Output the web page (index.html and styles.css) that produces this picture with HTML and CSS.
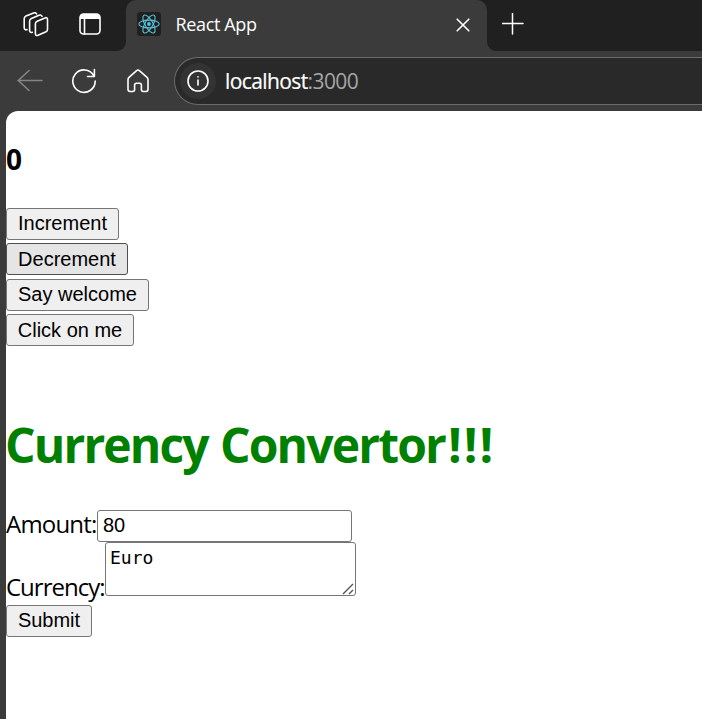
FILE: index.html
```html
<!DOCTYPE html>
<html lang="en">
<head>
<meta charset="utf-8">
<title>React App</title>
<link rel="stylesheet" href="styles.css">
</head>
<body>
<header class="tabstrip">
  <div class="strip-start">
    <svg class="icon" width="26" height="26" viewBox="0 0 26 26">
      <path d="M14.2 9.2 22 5.9Q24.5 5 24.5 7.5V17.2Q24.5 19 23 19.8L15 23.3Q12.4 24.2 12.4 21.5V11.8Q12.4 9.9 14.2 9.2M9.3 20.3Q6.6 21 6.6 18.3V9.3Q6.6 7.3 8.4 6.5L16 3.3Q18.2 2.5 19 4.3M4 17.6Q1.2 18.3 1.2 15.4V6.7Q1.2 4.7 3 3.9L10.6.9Q12.7.3 13.6 1.9"/>
    </svg>
    <svg class="icon" width="24" height="24" viewBox="0 0 24 24">
      <rect x="2" y="2" width="20" height="20" rx="3.5"/>
      <path d="M6.5 6V22"/>
      <path class="solid" d="M2 7V5Q2 2 5 2H19Q22 2 22 5V7Z"/>
    </svg>
  </div>
  <div class="tab">
    <svg class="favicon" width="24" height="24" viewBox="0 0 24 24">
      <rect width="24" height="24" rx="3"/>
      <ellipse cx="12" cy="12" rx="10.2" ry="3.9"/>
      <ellipse cx="12" cy="12" rx="10.2" ry="3.9" transform="rotate(60 12 12)"/>
      <ellipse cx="12" cy="12" rx="10.2" ry="3.9" transform="rotate(120 12 12)"/>
      <circle cx="12" cy="12" r="1.9"/>
    </svg>
    <span class="tab-title">React App</span>
    <svg class="icon close" width="14" height="14" viewBox="0 0 14 14"><path d="M1.2 1.2 12.8 12.8M12.8 1.2 1.2 12.8"/></svg>
  </div>
  <div class="strip-end">
    <svg class="icon" width="22" height="22" viewBox="0 0 22 22"><path d="M10.5 0V21M0 10.5H21"/></svg>
  </div>
</header>
<nav class="toolbar">
  <svg class="icon muted" width="26" height="26" viewBox="0 0 26 26"><path d="M25 12.5H1M12 2.5 1.3 12.5 12 22.5"/></svg>
  <svg class="icon" width="26" height="26" viewBox="0 0 26 26"><path d="M22.7 7.5A11.2 11.2 0 1 0 24.2 13M23.4 1.5V8.5H16.5"/></svg>
  <svg class="icon home" width="24" height="26" viewBox="0 0 24 26"><path d="M2 11.7Q2 10.3 3 9.4L10.6 2.6Q12 1.4 13.4 2.6L21 9.4Q22 10.3 22 11.7V21.3Q22 23.5 20 23.5H17.4Q15.4 23.5 15.4 21.5V17.2Q15.4 15.2 13.4 15.2H10.6Q8.6 15.2 8.6 17.2V21.5Q8.6 23.5 6.6 23.5H4Q2 23.5 2 21.3Z"/></svg>
  <div class="address">
    <span class="site-info">
      <svg class="icon" width="24" height="24" viewBox="0 0 24 24"><circle cx="12" cy="12" r="10"/><path d="M12 11V16M12 7.8V8"/></svg>
    </span>
    <span class="url"><span class="host">localhost</span>:3000</span>
  </div>
</nav>
<main class="page">
  <h3 class="count">0</h3>
  <div class="actions">
    <button class="btn increment">Increment</button>
    <button class="btn decrement">Decrement</button>
    <button class="btn welcome">Say welcome</button>
    <button class="btn click">Click on me</button>
  </div>
  <h1 class="title">Currency Convertor<span class="marks">!!!</span></h1>
  <form class="form">
    <div class="row"><label class="amount-label" for="amount">Amount:</label><input id="amount" class="amount" value="80"></div>
    <div class="row"><label class="currency-label" for="currency">Currency:</label><div class="currency-box"><textarea id="currency" class="currency">Euro</textarea><svg class="grip" width="12" height="12" viewBox="0 0 12 12"><path d="M1 11 11 1M7 11 11 7"/></svg></div></div>
    <button class="btn submit" type="button">Submit</button>
  </form>
</main>
</body>
</html>
```
FILE: styles.css
```css
* { box-sizing: border-box; }

body {
  margin: 0;
  height: 719px;
  overflow: hidden;
  display: flex;
  flex-direction: column;
  background: #3b3b3b;
  color: #000;
  font: 24px/32px "Open Sans", "Noto Sans", sans-serif;
}

svg { display: block; flex: none; }
.icon { fill: none; stroke: #fff; stroke-width: 1.6; stroke-linecap: round; stroke-linejoin: round; }
.icon .solid { fill: #fff; stroke: none; }
.icon.muted { stroke: #858585; }

.tabstrip {
  display: flex;
  flex: none;
  height: 51px;
  background: linear-gradient(#202020 25px, #3b3b3b 25px);
}
.strip-start {
  display: flex;
  gap: 29px;
  width: 126px;
  padding: 12px 0 0 23px;
  background: #202020;
  border-bottom-right-radius: 9px;
}
.tab {
  display: flex;
  align-items: center;
  width: 361px;
  padding: 0 17.5px 3px 11px;
  background: #3b3b3b;
  border-radius: 10px 10px 0 0;
}
.favicon { fill: none; stroke: #58c4dc; stroke-width: 1.1; }
.favicon rect { fill: #202020; stroke: none; }
.favicon circle { fill: #58c4dc; stroke: none; }
.tab-title { margin-left: 14.5px; color: #fff; font-size: 18px; letter-spacing: -0.35px; }
.close { margin: 2px 0 0 auto; }
.strip-end {
  flex: 1;
  padding: 13px 0 0 15px;
  background: #202020;
  border-bottom-left-radius: 9px;
}
.strip-end .icon { stroke-width: 1.5; }

.toolbar {
  display: flex;
  align-items: center;
  flex: none;
  height: 60px;
  padding-left: 17px;
}
.toolbar > .icon + .icon { margin-left: 28px; }
.toolbar > .icon.home { margin-left: 29px; }
.address {
  display: flex;
  align-items: center;
  flex: 1;
  height: 48px;
  margin-left: 24px;
  padding-left: 5px;
  background: #292929;
  border: 1.5px solid #6b6b6b;
  border-right: 0;
  border-radius: 24px 0 0 24px;
}
.site-info {
  display: grid;
  place-items: center;
  width: 36px;
  height: 36px;
  border-radius: 50%;
  background: #333;
}
.url { margin-left: 9px; color: #a6a6a6; font-size: 21px; letter-spacing: -0.6px; }
.host { color: #fff; -webkit-text-stroke: 0.2px #fff; }

.page {
  flex: 1;
  margin-left: 6px;
  padding-top: 32px;
  background: #fff;
  border-top-left-radius: 12px;
}
.count { margin: 0; font-size: 28px; font-weight: 700; line-height: 32px; }
.actions {
  display: flex;
  flex-direction: column;
  align-items: flex-start;
  gap: 3.4px;
  margin-top: 33px;
}
.btn {
  height: 32px;
  padding: 0 0 1px;
  border: 1px solid #767676;
  border-radius: 3px;
  background: #efefef;
  color: #000;
  font: 20px/28px "Liberation Sans", Arial, sans-serif;
}
.increment { width: 113px; padding-bottom: 2px; }
.decrement { width: 122px; background: #e5e5e5; border-color: #4f4f4f; }
.welcome { width: 143px; }
.click { width: 128px; }

.title {
  margin: 66.8px 0 0 -1px;
  color: #008000;
  font-size: 48px;
  font-weight: 700;
  line-height: 64px;
  letter-spacing: -1.85px;
  word-spacing: 1.5px;
  white-space: nowrap;
}
.marks { letter-spacing: 2.1px; margin-left: 3px; }
.form { margin-top: 33px; }
.row { display: flex; white-space: nowrap; }
.amount-label { width: 91px; line-height: 28px; letter-spacing: -0.8px; }
.currency-label { width: 99px; height: 61px; padding-top: 29px; letter-spacing: -1px; }
.amount {
  width: 255px;
  height: 32px;
  padding: 0 5px 1px;
  border: 1px solid #767676;
  border-radius: 3px;
  font: 20px/28px "Liberation Sans", Arial, sans-serif;
}
.currency-box { position: relative; width: 251px; height: 54px; }
.currency {
  display: block;
  width: 100%;
  height: 100%;
  padding: 3px 4px;
  border: 1px solid #767676;
  border-radius: 3px;
  resize: none;
  font: 18px/24px "DejaVu Sans Mono", monospace;
}
.grip { position: absolute; right: 2px; bottom: 1px; fill: none; stroke: #555; stroke-width: 1.4; }
.submit { display: block; width: 86px; }
.row + .submit { margin-top: 2px; }
```
